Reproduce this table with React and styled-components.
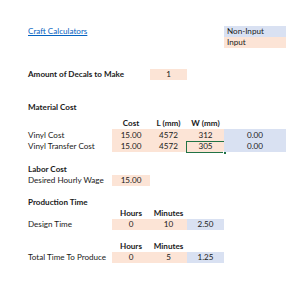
import React from "react";
import styled, { createGlobalStyle } from "styled-components";

const Global = createGlobalStyle`
  html, body { margin: 0; padding: 0; background: #fff; }
  body { font-family: Lato, "Open Sans", sans-serif; color: #1a1a1a; }
`;

const Sheet = styled.div`
  width: 300px;
  height: 300px;
  padding: 26px 0 0 25px;
  box-sizing: border-box;
  font-size: 8.1px;
`;

const Row = styled.div`
  display: grid;
  grid-template-columns: 87px 38px 37px 37px 62px;
  height: ${(p) => p.$h || 11}px;
`;

const Cell = styled.div`
  position: relative;
  display: flex;
  align-items: ${(p) => (p.$bottom ? "flex-end" : "center")};
  justify-content: ${(p) => (p.$left ? "flex-start" : "center")};
  padding: ${(p) => (p.$left ? "0 0 0 3px" : "0")};
  background: ${(p) =>
    p.$kind === "in" ? "#fce4d6" : p.$kind === "out" ? "#d9e1f2" : "transparent"};
  font-weight: ${(p) => (p.$bold ? 700 : 400)};
  white-space: nowrap;
  line-height: 11px;
`;

const Link = styled.a`
  color: #0563c1;
  text-decoration: underline;
`;

const Selection = styled.div`
  position: absolute;
  inset: 0 -1px -1px -1px;
  border: 1.5px solid #217346;
  pointer-events: none;
  &::after {
    content: "";
    position: absolute;
    right: -3px;
    bottom: -3px;
    width: 4px;
    height: 4px;
    background: #217346;
    border: 1px solid #fff;
    box-sizing: border-box;
  }
`;

export default function App() {
  return (
    <>
      <Global />
      <Sheet>
        <Row $h={11}>
          <Cell $left style={{ gridColumn: "1 / span 2" }}>
            <Link>Craft Calculators</Link>
          </Cell>
          <Cell />
          <Cell />
          <Cell $left $kind="out">Non-Input</Cell>
        </Row>
        <Row $h={10}>
          <Cell />
          <Cell />
          <Cell />
          <Cell />
          <Cell $left $kind="in">Input</Cell>
        </Row>
        <Row $h={11} />
        <Row $h={11} />
        <Row $h={11}>
          <Cell $left $bold>Amount of Decals to Make</Cell>
          <Cell />
          <Cell $kind="in">1</Cell>
        </Row>
        <Row $h={11} />
        <Row $h={11} />
        <Row $h={11}>
          <Cell $left $bold>Material Cost</Cell>
        </Row>
        <Row $h={16}>
          <Cell />
          <Cell $bold $bottom>Cost</Cell>
          <Cell $bold $bottom>L (mm)</Cell>
          <Cell $bold $bottom>W (mm)</Cell>
        </Row>
        <Row $h={12}>
          <Cell $left>Vinyl Cost</Cell>
          <Cell $kind="in">15.00</Cell>
          <Cell $kind="in">4572</Cell>
          <Cell $kind="in">312</Cell>
          <Cell $kind="out">0.00</Cell>
        </Row>
        <Row $h={11}>
          <Cell $left>Vinyl Transfer Cost</Cell>
          <Cell $kind="in">15.00</Cell>
          <Cell $kind="in">4572</Cell>
          <Cell $kind="in">
            305
            <Selection />
          </Cell>
          <Cell $kind="out">0.00</Cell>
        </Row>
        <Row $h={11} />
        <Row $h={12}>
          <Cell $left $bold>Labor Cost</Cell>
        </Row>
        <Row $h={11}>
          <Cell $left>Desired Hourly Wage</Cell>
          <Cell $kind="in">15.00</Cell>
        </Row>
        <Row $h={11} />
        <Row $h={11}>
          <Cell $left $bold>Production Time</Cell>
        </Row>
        <Row $h={11}>
          <Cell />
          <Cell $bold>Hours</Cell>
          <Cell $bold>Minutes</Cell>
        </Row>
        <Row $h={11}>
          <Cell $left>Design Time</Cell>
          <Cell $kind="in">0</Cell>
          <Cell $kind="in">10</Cell>
          <Cell $kind="out">2.50</Cell>
        </Row>
        <Row $h={11} />
        <Row $h={11}>
          <Cell />
          <Cell $bold>Hours</Cell>
          <Cell $bold>Minutes</Cell>
        </Row>
        <Row $h={11}>
          <Cell $left>Total Time To Produce</Cell>
          <Cell $kind="in">0</Cell>
          <Cell $kind="in">5</Cell>
          <Cell $kind="out">1.25</Cell>
        </Row>
      </Sheet>
    </>
  );
}
